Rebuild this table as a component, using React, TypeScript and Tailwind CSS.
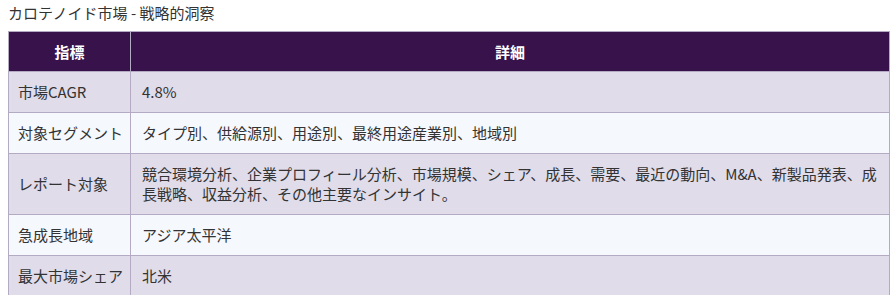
import React from "react";

const rows: [string, string][] = [
  ["市場CAGR", "4.8%"],
  ["対象セグメント", "タイプ別、供給源別、用途別、最終用途産業別、地域別"],
  [
    "レポート対象",
    "競合環境分析、企業プロフィール分析、市場規模、シェア、成長、需要、最近の動向、M&A、新製品発表、成長戦略、収益分析、その他主要なインサイト。",
  ],
  ["急成長地域", "アジア太平洋"],
  ["最大市場シェア", "北米"],
];

export default function App() {
  return (
    <div
      className="bg-white text-[#333] px-2 pt-[2px]"
      style={{ fontFamily: '"Noto Sans CJK JP", "Noto Sans", sans-serif' }}
    >
      <div className="text-[15px] leading-[22px] mb-[7px]">カロテノイド市場 - 戦略的洞察</div>
      <table className="w-[882px] table-fixed border-collapse text-[15px] leading-[20px]">
        <colgroup>
          <col className="w-[122px]" />
          <col />
        </colgroup>
        <thead>
          <tr className="bg-[#37124b] text-white">
            <th className="border border-[#b4aac4] h-[40px] font-bold text-center">指標</th>
            <th className="border border-[#b4aac4] h-[40px] font-bold text-center">詳細</th>
          </tr>
        </thead>
        <tbody>
          {rows.map(([k, v], i) => (
            <tr key={k} className={i % 2 === 0 ? "bg-[#e0dcea]" : "bg-[#f5f8fc]"}>
              <td className="border border-[#b4aac4] pl-[9px] pr-0 py-[10px] align-middle whitespace-nowrap">{k}</td>
              <td className="border border-[#b4aac4] pl-[11px] pr-[10px] py-[10px] align-middle">{v}</td>
            </tr>
          ))}
        </tbody>
      </table>
    </div>
  );
}
